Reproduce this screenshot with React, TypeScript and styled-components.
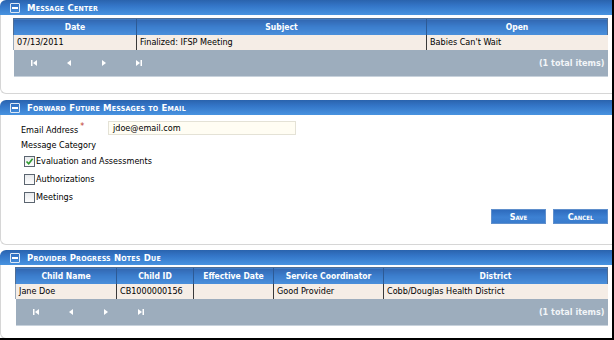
import styled, { createGlobalStyle } from "styled-components";

const GlobalStyle = createGlobalStyle`
  html, body { margin: 0; padding: 0; background: #fff; }
  body { font-family: "DejaVu Sans Condensed", "DejaVu Sans", sans-serif; font-size: 9px; color: #000; }
  * { box-sizing: border-box; }
`;

const Frame = styled.div`
  width: 614px;
  height: 340px;
  border-right: 2px solid #000;
  border-bottom: 2px solid #000;
  background: #fff;
  overflow: hidden;
`;

const Panel = styled.section<{ $gap?: number }>`
  margin-bottom: ${(p) => p.$gap ?? 6}px;
`;

const PanelHeader = styled.div`
  height: 15px;
  display: flex;
  align-items: center;
  gap: 7px;
  padding-left: 10px;
  border-top-left-radius: 6px;
  background: linear-gradient(#2a63ad 0%, #3476c8 40%, #4893e0 100%);
  color: #fff;
  font-size: 9.5px;
  font-weight: bold;
  font-variant: small-caps;
  letter-spacing: 0.2px;
`;

const Toggle = styled.span`
  width: 10px;
  height: 10px;
  border: 1px solid #dfe9f6;
  border-radius: 1px;
  display: flex;
  align-items: center;
  justify-content: center;
  &::after {
    content: "";
    width: 6px;
    height: 2px;
    background: #fff;
  }
`;

const PanelBody = styled.div<{ $pt: number; $pb: number; $pl: number }>`
  border: 1px solid #d6d6d6;
  border-top: none;
  border-right: none;
  border-bottom-left-radius: 6px;
  padding: ${(p) => p.$pt}px 4px ${(p) => p.$pb}px ${(p) => p.$pl}px;
`;

const Grid = styled.table`
  width: 100%;
  border-collapse: collapse;
  table-layout: fixed;
  font-size: 9px;
`;

const HeadCell = styled.th`
  height: 16px;
  padding: 0;
  color: #fff;
  font-size: 8.5px;
  font-weight: bold;
  text-align: center;
  background: linear-gradient(#3267b0 0%, #3b7dcc 45%, #4b90dc 100%);
  border-top: 1px solid #4f6e96;
  border-left: 1px solid #2d5a95;
  &:first-child { border-left: 1px solid #4f6e96; }
  &:last-child { border-right: 1px solid #4f6e96; }
`;

const Cell = styled.td`
  height: 15px;
  padding: 0 2px 0 3px;
  background: #f5ede6;
  border-left: 1px solid #3a3a3a;
  white-space: nowrap;
  overflow: hidden;
  &:first-child { border-left: 1px solid #9aa9ba; }
`;

const Pager = styled.td`
  height: 27px;
  padding: 0;
  background: #9dadbd;
  border-bottom: 1px solid #c8d2dc;
`;

const PagerInner = styled.div`
  display: flex;
  align-items: center;
  height: 100%;
  padding-left: 16px;
  padding-right: 3px;
  color: #f2f5f8;
  font-weight: bold;
`;

const PagerButton = styled.span`
  width: 35px;
  display: flex;
  align-items: center;
`;

const TotalItems = styled.span`
  margin-left: auto;
`;

type Arrow = "first" | "prev" | "next" | "last";

function PagerIcon({ kind }: { kind: Arrow }) {
  return (
    <svg width="8" height="8" viewBox="0 0 8 8">
      {kind === "first" && (
        <>
          <rect x="1" y="1" width="1.5" height="6" fill="#fff" />
          <polygon points="7,1 3,4 7,7" fill="#fff" />
        </>
      )}
      {kind === "prev" && <polygon points="6,1 2,4 6,7" fill="#fff" />}
      {kind === "next" && <polygon points="2,1 6,4 2,7" fill="#fff" />}
      {kind === "last" && (
        <>
          <polygon points="1,1 5,4 1,7" fill="#fff" />
          <rect x="5.5" y="1" width="1.5" height="6" fill="#fff" />
        </>
      )}
    </svg>
  );
}

function PagerRow({ cols }: { cols: number }) {
  return (
    <tr>
      <Pager colSpan={cols}>
        <PagerInner>
          {(["first", "prev", "next", "last"] as Arrow[]).map((k) => (
            <PagerButton key={k}>
              <PagerIcon kind={k} />
            </PagerButton>
          ))}
          <TotalItems>(1 total items)</TotalItems>
        </PagerInner>
      </Pager>
    </tr>
  );
}

const Form = styled.div`
  display: flex;
  flex-direction: column;
  padding-left: 20px;
`;

const FieldRow = styled.div`
  display: flex;
  align-items: center;
  height: 14px;
`;

const Label = styled.span`
  width: 87px;
`;

const Required = styled.sup`
  color: #c0392b;
  font-size: 9px;
  margin-left: 2px;
`;

const TextInput = styled.div`
  width: 188px;
  height: 14px;
  border: 1px solid #e4e2d6;
  background: #fffdf3;
  padding: 0 0 0 4px;
  line-height: 12px;
`;

const Category = styled.div`
  margin-top: 3px;
  height: 14px;
  display: flex;
  align-items: center;
`;

const CheckRow = styled.label`
  display: flex;
  align-items: center;
  gap: 1px;
  height: 18px;
  padding-left: 3px;
`;

const Box = styled.span`
  width: 11px;
  height: 11px;
  border: 1px solid #5b6570;
  background: linear-gradient(#e9ebee, #fdfdfd);
  display: flex;
  align-items: center;
  justify-content: center;
`;

const Actions = styled.div`
  display: flex;
  justify-content: flex-end;
  gap: 7px;
  margin-top: 3px;
`;

const Button = styled.button`
  width: 55px;
  height: 15px;
  padding: 0;
  border: 1px solid #5f8fcc;
  background: linear-gradient(#2e6bbd 0%, #3d81d3 55%, #3a7ccd 100%);
  color: #fff;
  font-family: "DejaVu Sans Condensed", "DejaVu Sans", sans-serif;
  font-size: 9px;
  line-height: 12px;
  font-weight: bold;
  font-variant: small-caps;
`;

function Check({ label, checked }: { label: string; checked?: boolean }) {
  return (
    <CheckRow>
      <Box>
        {checked && (
          <svg width="9" height="9" viewBox="0 0 9 9">
            <path d="M1.5 4.5 L3.7 6.8 L7.6 1.8" stroke="#2e9a2e" strokeWidth="1.6" fill="none" />
          </svg>
        )}
      </Box>
      {label}
    </CheckRow>
  );
}

function PanelTitle({ title }: { title: string }) {
  return (
    <PanelHeader>
      <Toggle />
      {title}
    </PanelHeader>
  );
}

export default function App() {
  return (
    <>
      <GlobalStyle />
      <Frame>
        <Panel>
          <PanelTitle title="Message Center" />
          <PanelBody $pt={3} $pb={16} $pl={12}>
            <Grid>
              <colgroup>
                <col style={{ width: 123 }} />
                <col style={{ width: 290 }} />
                <col />
              </colgroup>
              <thead>
                <tr>
                  <HeadCell>Date</HeadCell>
                  <HeadCell>Subject</HeadCell>
                  <HeadCell>Open</HeadCell>
                </tr>
              </thead>
              <tbody>
                <tr>
                  <Cell>07/13/2011</Cell>
                  <Cell>Finalized: IFSP Meeting</Cell>
                  <Cell>Babies Can't Wait</Cell>
                </tr>
                <PagerRow cols={3} />
              </tbody>
            </Grid>
          </PanelBody>
        </Panel>

        <Panel $gap={5}>
          <PanelTitle title="Forward Future Messages to Email" />
          <PanelBody $pt={6} $pb={20} $pl={0}>
            <Form>
              <FieldRow>
                <Label>
                  Email Address<Required>*</Required>
                </Label>
                <TextInput>jdoe@email.com</TextInput>
              </FieldRow>
              <Category>Message Category</Category>
              <Check label="Evaluation and Assessments" checked />
              <Check label="Authorizations" />
              <Check label="Meetings" />
              <Actions>
                <Button>Save</Button>
                <Button>Cancel</Button>
              </Actions>
            </Form>
          </PanelBody>
        </Panel>

        <Panel>
          <PanelTitle title="Provider Progress Notes Due" />
          <PanelBody $pt={2} $pb={12} $pl={14}>
            <Grid>
              <colgroup>
                <col style={{ width: 101 }} />
                <col style={{ width: 77 }} />
                <col style={{ width: 80 }} />
                <col style={{ width: 110 }} />
                <col />
              </colgroup>
              <thead>
                <tr>
                  <HeadCell>Child Name</HeadCell>
                  <HeadCell>Child ID</HeadCell>
                  <HeadCell>Effective Date</HeadCell>
                  <HeadCell>Service Coordinator</HeadCell>
                  <HeadCell>District</HeadCell>
                </tr>
              </thead>
              <tbody>
                <tr>
                  <Cell>Jane Doe</Cell>
                  <Cell>CB1000000156</Cell>
                  <Cell></Cell>
                  <Cell>Good Provider</Cell>
                  <Cell>Cobb/Douglas Health District</Cell>
                </tr>
                <PagerRow cols={5} />
              </tbody>
            </Grid>
          </PanelBody>
        </Panel>
      </Frame>
    </>
  );
}
